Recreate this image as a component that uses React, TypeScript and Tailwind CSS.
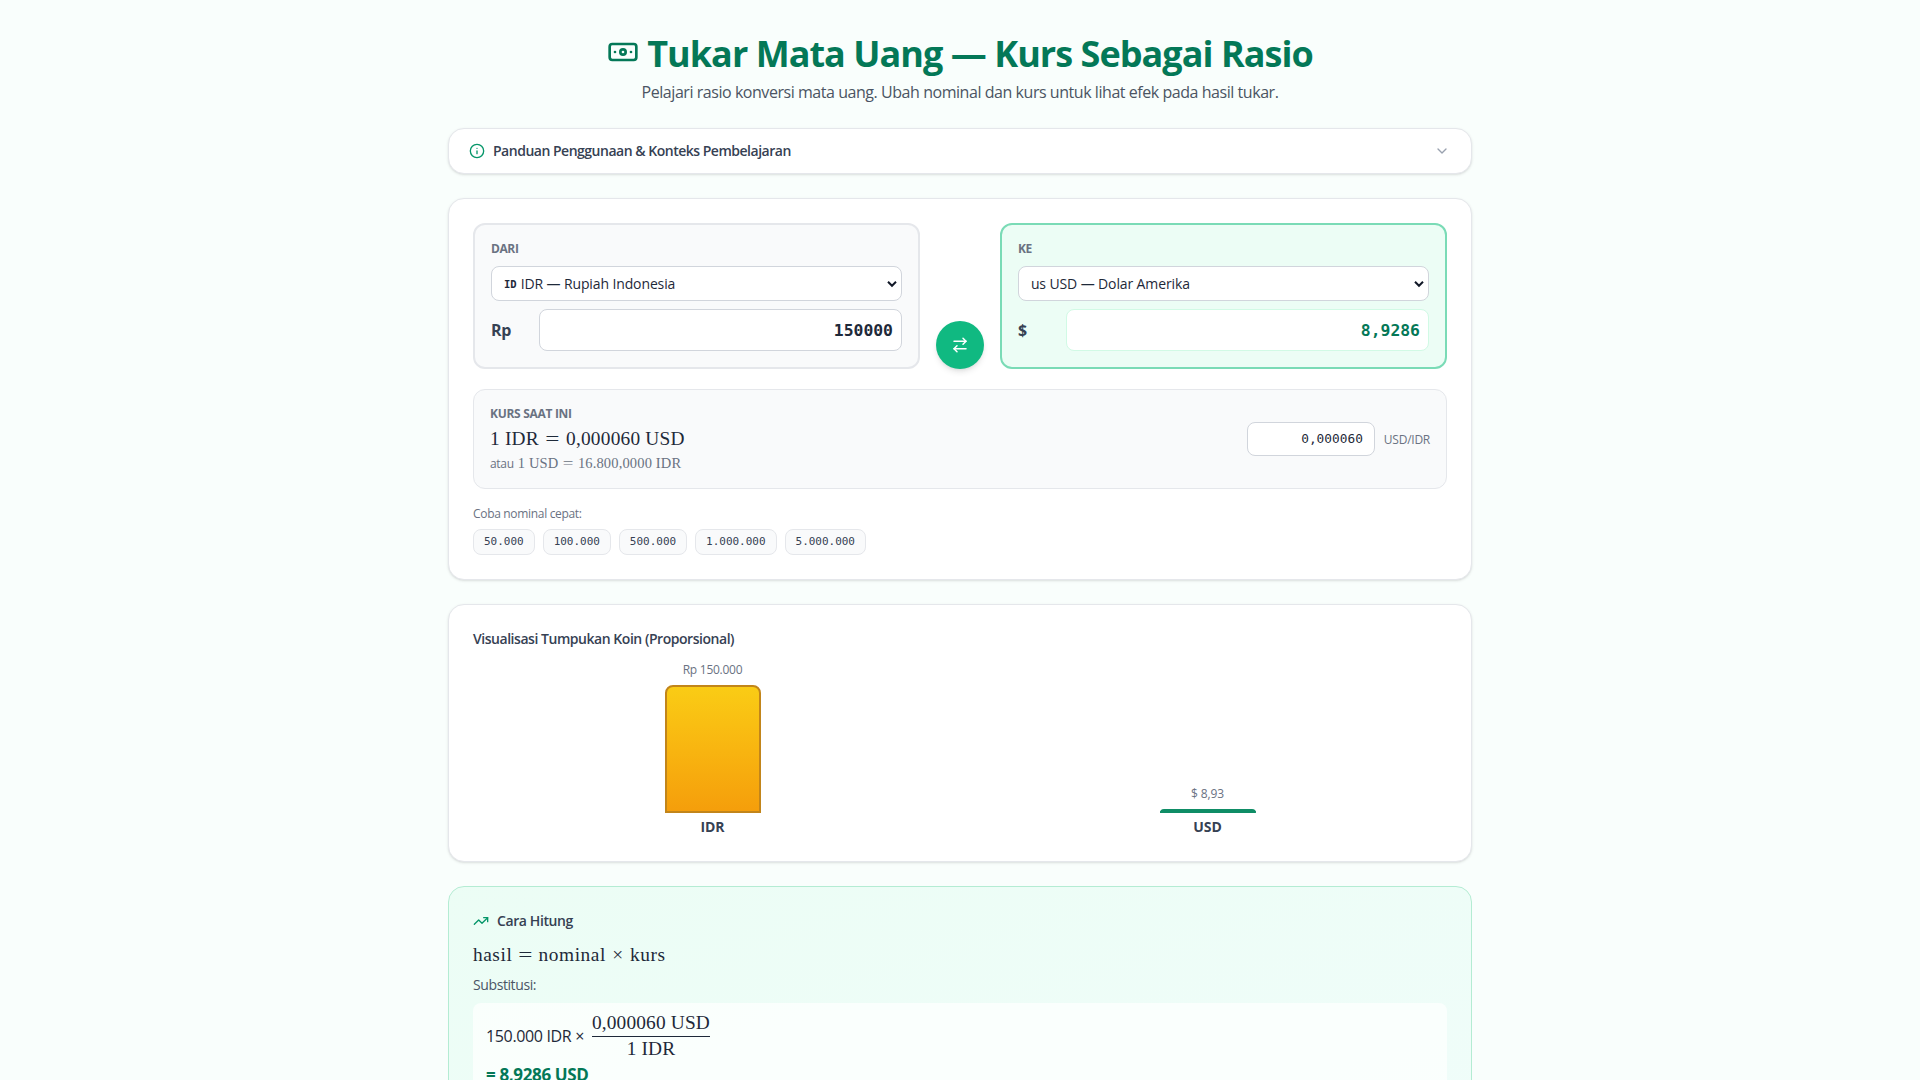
import React from "react";
import { ArrowRightLeft, Banknote, ChevronDown, Info, TrendingUp } from "lucide-react";

const quickAmounts = ["50.000", "100.000", "500.000", "1.000.000", "5.000.000"];

const Tex = ({ children, className = "" }: { children: React.ReactNode; className?: string }) => (
  <span className={`font-['Liberation_Serif',serif] whitespace-nowrap ${className}`}>{children}</span>
);

const CurrencySelect = ({ flag, label }: { flag: React.ReactNode; label: string }) => (
  <button className="flex h-[35px] w-full items-center rounded-lg border border-gray-300 bg-white pl-3 pr-1 text-left text-sm font-medium text-gray-800">
    {flag}
    <span className="ml-1 flex-1 tracking-[-0.12px]">{label}</span>
    <svg width="10" height="8" viewBox="0 0 10 8" fill="none" stroke="#111827" strokeWidth="2">
      <path d="M1 1.8 5 5.8 9 1.8" />
    </svg>
  </button>
);

const App = () => {
  return (
    <div className="h-[1080px] overflow-hidden bg-[#f9fefc] font-['Open_Sans',sans-serif] text-gray-800">
      <div className="mx-auto w-[1024px] pt-8">
        {/* Header */}
        <header className="mb-6 text-center">
          <h1 className="mb-2 flex h-10 items-center justify-center gap-2 whitespace-nowrap text-4xl font-bold text-[#047857]">
            <Banknote className="h-8 w-8" />
            <span className="mt-1 tracking-[-0.96px]">Tukar Mata Uang — Kurs Sebagai Rasio</span>
          </h1>
          <p className="h-6 text-base tracking-[-0.45px] text-[#4b5563]">
            Pelajari rasio konversi mata uang. Ubah nominal dan kurs untuk lihat efek pada hasil tukar.
          </p>
        </header>

        <section className="mb-6 flex h-[46px] items-center rounded-2xl border border-gray-200 bg-white px-5 shadow-sm">
          <Info className="h-4 w-4 text-[#059669]" />
          <span className="ml-2 flex-1 text-sm font-semibold tracking-[-0.49px] text-gray-700">
            Panduan Penggunaan &amp; Konteks Pembelajaran
          </span>
          <ChevronDown className="mr-px h-4 w-4 text-gray-400" />
        </section>

        {/* Converter */}
        <section className="mb-6 h-[382px] rounded-2xl border border-gray-200 bg-white p-6 shadow-sm">
          <div className="grid grid-cols-[1fr_48px_1fr] items-end gap-4">
            <div className="h-[146px] rounded-xl border-2 border-gray-200 bg-gray-50 p-4">
              <div className="mb-[9px] text-xs font-bold leading-4 tracking-[-0.4px] text-gray-500">DARI</div>
              <CurrencySelect
                flag={<span className="mt-0.5 font-['DejaVu_Sans_Mono',monospace] text-[10.5px] font-bold">ID</span>}
                label="IDR — Rupiah Indonesia"
              />
              <div className="mt-2 flex items-center gap-2">
                <span className="w-10 text-base font-bold tracking-[-0.3px] text-gray-700">Rp</span>
                <div className="flex h-[42px] flex-1 items-center justify-end rounded-lg border border-gray-300 bg-white px-2 pt-0.5 font-['DejaVu_Sans_Mono',monospace] text-[16.4px] font-bold">
                  150000
                </div>
              </div>
            </div>

            <button className="flex h-12 w-12 items-center justify-center rounded-full bg-[#10b981] text-white shadow-md">
              <ArrowRightLeft className="h-[18px] w-[18px]" />
            </button>

            <div className="h-[146px] rounded-xl border-2 border-[#7adbb6] bg-emerald-50 p-4">
              <div className="mb-[9px] text-xs font-bold leading-4 tracking-[-0.4px] text-gray-500">KE</div>
              <CurrencySelect flag={<span className="tracking-[-0.4px]">us</span>} label="USD — Dolar Amerika" />
              <div className="mt-2 flex items-center gap-2">
                <span className="w-10 text-base font-bold text-gray-700">$</span>
                <div className="flex h-[42px] flex-1 items-center justify-end rounded-lg border border-[#d1fae5] bg-white px-2 pt-0.5 font-['DejaVu_Sans_Mono',monospace] text-[16.4px] font-bold text-[#047857]">
                  8,9286
                </div>
              </div>
            </div>
          </div>

          <div className="mt-5 flex h-[100px] items-center justify-between rounded-xl border border-gray-200 bg-gray-50 px-4">
            <div className="h-[66px]">
              <div className="text-xs font-bold leading-4 tracking-[-0.3px] text-gray-500">KURS SAAT INI</div>
              <div className="flex h-[33px] items-center text-gray-800">
                <Tex className="text-[19.36px] tracking-[0.2px]">
                  1 IDR <span className="mx-[3px] inline-block scale-x-130">=</span> 0,000060 USD
                </Tex>
              </div>
              <div className="flex h-[17px] items-center gap-1 text-xs text-gray-500">
                <span className="tracking-[-0.3px]">atau</span>
                <Tex className="text-[14.5px] tracking-[0.15px]">
                  1 USD <span className="mx-[1.8px] inline-block scale-x-130">=</span> 16.800,0000 IDR
                </Tex>
              </div>
            </div>
            <div className="flex items-center gap-[9px]">
              <div className="flex h-[34px] w-32 items-center justify-end rounded-lg border border-gray-300 bg-white px-[11px] font-['DejaVu_Sans_Mono',monospace] text-[12.8px]">
                0,000060
              </div>
              <span className="pt-0.5 text-xs tracking-[-0.25px] text-gray-500">USD/IDR</span>
            </div>
          </div>

          <div className="mt-[17px] text-xs leading-4 tracking-[-0.32px] text-gray-500">Coba nominal cepat:</div>
          <div className="mt-[7px] flex gap-2">
            {quickAmounts.map((amount) => (
              <button
                key={amount}
                className="h-[26px] rounded-lg border border-gray-200 bg-gray-50 px-2.5 font-['DejaVu_Sans_Mono',monospace] text-[10.98px] text-gray-700"
              >
                {amount}
              </button>
            ))}
          </div>
        </section>

        {/* Coin stacks */}
        <section className="mb-6 h-[258px] rounded-2xl border border-gray-200 bg-white p-6 shadow-sm">
          <h2 className="text-sm font-semibold leading-5 tracking-[-0.46px] text-gray-700">
            Visualisasi Tumpukan Koin (Proporsional)
          </h2>
          <div className="mt-[13px] grid grid-cols-2 items-end gap-4">
            <div className="flex flex-col items-center">
              <span className="mb-[7px] text-xs leading-4 tracking-[-0.25px] text-gray-500">Rp 150.000</span>
              <div className="h-32 w-24 rounded-t-lg border-2 border-[#c2851a] bg-linear-to-b from-[#facc15] to-[#f59e0b]" />
              <span className="mt-1 text-sm font-bold leading-5 text-gray-700">IDR</span>
            </div>
            <div className="flex flex-col items-center">
              <span className="mb-[7px] text-xs leading-4 tracking-[-0.15px] text-gray-500">$ 8,93</span>
              <div className="h-1 w-24 rounded-t-lg border-2 border-[#0f8d66] bg-emerald-500" />
              <span className="mt-1 text-sm font-bold leading-5 text-gray-700">USD</span>
            </div>
          </div>
        </section>

        {/* Calculation */}
        <section className="rounded-2xl border border-[#b4ecd3] bg-linear-to-br from-emerald-50 to-teal-50 p-6">
          <h2 className="flex items-center gap-2 text-sm font-semibold leading-5 tracking-[-0.4px] text-gray-700">
            <TrendingUp className="h-4 w-4 text-[#059669]" />
            <span>Cara Hitung</span>
          </h2>
          <div className="mt-3 flex h-6 items-center">
            <Tex className="text-[19.36px] tracking-[0.55px]">
              hasil <span className="mx-[2px] inline-block scale-x-130">=</span> nominal{" "}
              <span className="mx-px">×</span> kurs
            </Tex>
          </div>
          <div className="mt-2 text-sm leading-5 tracking-[-0.4px] text-gray-600">Substitusi:</div>
          <div className="mt-2 h-[160px] rounded-lg bg-white/70 px-[13px] pt-2">
            <div className="flex h-[48px] items-center">
              <span className="mr-2 mt-px text-base tracking-[-0.35px]">150.000 IDR ×</span>
              <span className="flex flex-col items-center">
                <Tex className="border-b border-gray-800 pb-px text-[19.36px] leading-6 tracking-[0.15px]">0,000060 USD</Tex>
                <Tex className="text-[19.36px] leading-[23px] tracking-[0.15px]">1 IDR</Tex>
              </span>
            </div>
            <div className="mt-1 text-[17px] font-bold leading-6 tracking-[-0.35px] text-[#047857]">= 8,9286 USD</div>
          </div>
        </section>
      </div>
    </div>
  );
};

export default App;
